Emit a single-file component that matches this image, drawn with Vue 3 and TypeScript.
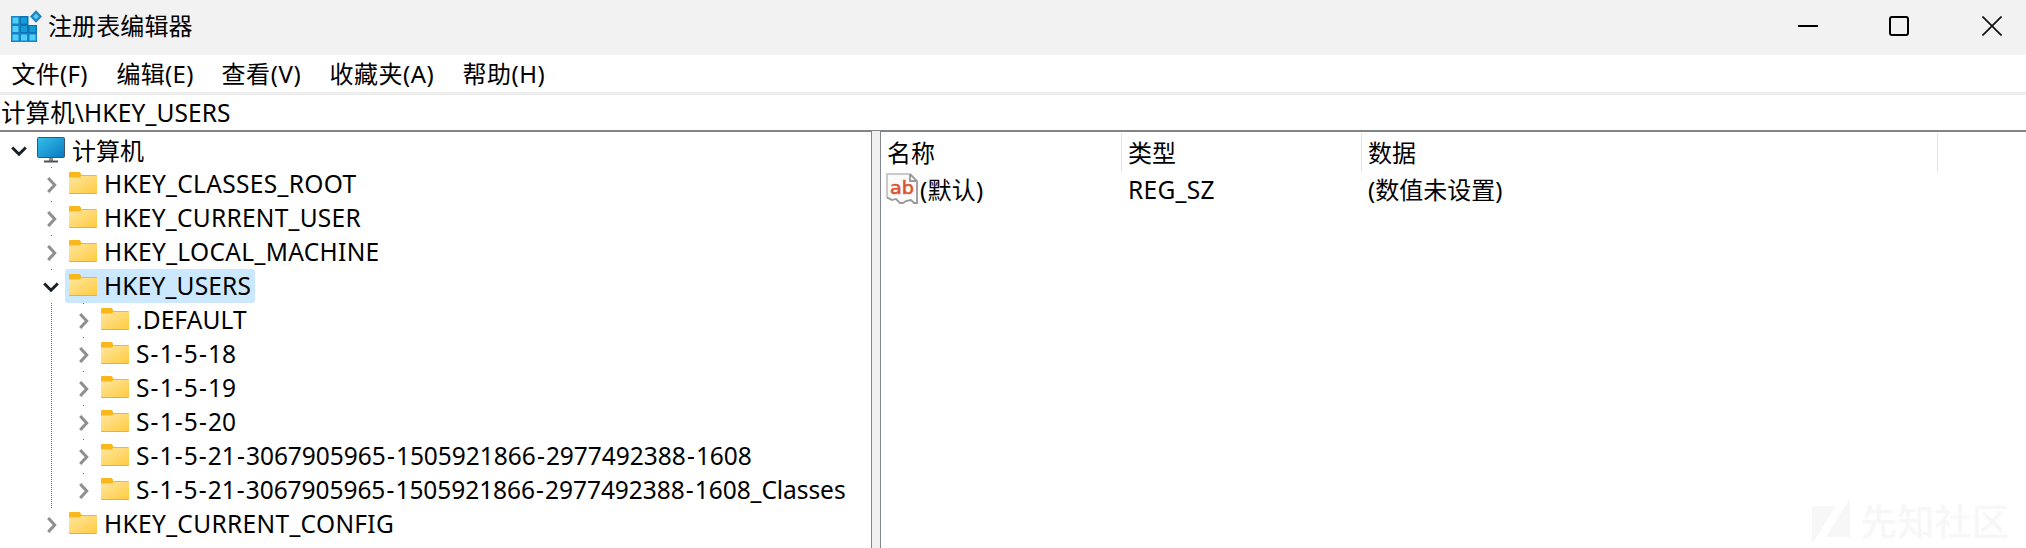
<script setup lang="ts">
interface Label { text: string; spacing?: number }
interface TreeNode extends Label { depth: number; open?: boolean; selected?: boolean; root?: boolean }

const menus: Label[] = [
  { text: '文件(F)', spacing: 0.3 },
  { text: '编辑(E)', spacing: 0.3 },
  { text: '查看(V)', spacing: 0.6 },
  { text: '收藏夹(A)', spacing: 0.5 },
  { text: '帮助(H)', spacing: 0.5 },
]

const nodes: TreeNode[] = [
  { text: '计算机', depth: 0, open: true, root: true },
  { text: 'HKEY_CLASSES_ROOT', depth: 1, spacing: 0.32 },
  { text: 'HKEY_CURRENT_USER', depth: 1, spacing: 0.26 },
  { text: 'HKEY_LOCAL_MACHINE', depth: 1, spacing: 0.33 },
  { text: 'HKEY_USERS', depth: 1, open: true, selected: true, spacing: 0.18 },
  { text: '.DEFAULT', depth: 2, spacing: 0.1 },
  { text: 'S-1-5-18', depth: 2 },
  { text: 'S-1-5-19', depth: 2 },
  { text: 'S-1-5-20', depth: 2 },
  { text: 'S-1-5-21-3067905965-1505921866-2977492388-1608', depth: 2, spacing: -0.03 },
  { text: 'S-1-5-21-3067905965-1505921866-2977492388-1608_Classes', depth: 2, spacing: -0.06 },
  { text: 'HKEY_CURRENT_CONFIG', depth: 1, spacing: 0.33 },
]

const spacing = (l: Label) => ({ letterSpacing: `${l.spacing ?? 0}px` })
const parts = (text: string) => text.split(/(-)/)
</script>

<template>
  <div class="window">
    <header class="titlebar">
      <svg class="app-icon" width="32" height="32" viewBox="0 0 32 32">
        <path d="M1 6h17v9h9v17H1z" fill="#1583c4" />
        <path d="M10 6h8.500v9H27v8H10z" fill="#0f72b0" />
        <g fill="#4fd0fb">
          <path d="M2.500 7.500h6v6h-6zM2.500 16h6v6h-6zM2.500 24.500h6v6h-6zM11 24.500h6v6h-6zM19.500 24.500h6v6h-6z" />
        </g>
        <path d="M11 7.500h6v6h-6zM11 16h6v6h-6zM19.500 16h6v6h-6z" fill="#159ad8" />
        <path d="M26 .3l6 6.200-6 6.200-6-6.200z" fill="#1d83bd" />
        <path d="M26 3.500l3 3-3 3-3-3z" fill="#57c9f2" />
      </svg>
      <span class="title">注册表编辑器</span>
      <div class="controls">
        <svg width="20" height="20" viewBox="0 0 20 20"><path d="M0 10h20" stroke="#000" stroke-width="2" /></svg>
        <svg width="20" height="20" viewBox="0 0 20 20"><rect x="1" y="1" width="18" height="18" rx="2" fill="none" stroke="#000" stroke-width="2" /></svg>
        <svg width="20" height="20" viewBox="0 0 20 20"><path d="M.5.5l19 19M19.500.5l-19 19" stroke="#111" stroke-width="1.700" /></svg>
      </div>
    </header>

    <nav class="menubar">
      <span v-for="m in menus" :key="m.text" class="menu"><span :style="spacing(m)">{{ m.text }}</span></span>
    </nav>

    <div class="address"><span>计算机\HKEY_USERS</span></div>

    <main class="body">
      <section class="tree">
        <div v-for="n in nodes" :key="n.text" class="node" :class="'depth-' + n.depth">
          <i v-if="n.depth === 2" class="guide"></i>
          <span class="toggle">
            <i v-if="n.depth" class="dot"></i>
            <svg v-if="n.open" width="16" height="10" viewBox="0 0 16 10"><path d="M1.200 1.500L8 8.200l6.800-6.700" fill="none" stroke="#172126" stroke-width="3" /></svg>
            <svg v-else class="closed" width="10" height="16" viewBox="0 0 10 16"><path d="M1.200 1l6.500 7-6.500 7" fill="none" stroke="#8f8f8f" stroke-width="3" /></svg>
          </span>
          <span class="item" :class="{ selected: n.selected }">
            <svg v-if="n.root" class="pc" width="28" height="26" viewBox="0 0 28 26">
              <defs><linearGradient id="screen" x1="0" y1="0" x2="1" y2="1"><stop offset="0" stop-color="#35c0e8" /><stop offset="1" stop-color="#0878c4" /></linearGradient></defs>
              <path d="M12 20h4v4h-4z" fill="#8a9299" />
              <path d="M7 23.500h14v2H7z" fill="#4d5358" />
              <rect x=".5" y=".5" width="27" height="20" rx="1" fill="url(#screen)" stroke="#3f5560" />
            </svg>
            <svg v-else class="folder" width="28" height="22" viewBox="0 0 28 22">
              <defs><linearGradient id="folder" x1="0" y1="0" x2="1" y2="1"><stop offset="0" stop-color="#ffe7a0" /><stop offset="1" stop-color="#ffcb3f" /></linearGradient></defs>
              <path d="M0 1q0-1 1-1h9.500L12 1.500V3h15q1 0 1 1v4H0z" fill="#fab71c" />
              <path d="M0 5.500h10.500L12.500 4H28v16.500q0 1-1 1H1q-1 0-1-1z" fill="url(#folder)" />
              <path d="M0 20.800q0 .7 1 .7h26q1 0 1-.7" fill="none" stroke="#eeb024" />
            </svg>
            <span class="label" :class="{ 'root-label': n.root }" :style="spacing(n)"><span v-for="(p, i) in parts(n.text)" :key="i" :class="{ hyphen: p === '-' }">{{ p }}</span></span>
          </span>
        </div>
      </section>

      <div class="splitter"></div>

      <section class="list">
        <div class="columns">
          <span class="col name">名称</span>
          <span class="col type">类型</span>
          <span class="col data">数据</span>
        </div>
        <div class="values">
          <span class="cell name">
            <svg class="ab" width="32" height="32" viewBox="0 0 32 32">
              <path d="M1 1h23l7 7v22l-4 1-4-4-5 1-4 2-5-4H1z" fill="#fbfbfb" />
              <path d="M1 25V1h23" fill="none" stroke="#c9c9c9" stroke-width="2" />
              <path d="M24 1v7h7M24 1l7 7v22h-3l-3-3-5 1-3 2h-3l-4-4-4 1-4-2H1" fill="none" stroke="#999" stroke-width="1.800" />
              <text x="4" y="21" class="ab-text" textLength="24" lengthAdjust="spacingAndGlyphs">ab</text>
            </svg>
            <span class="default">(默认)</span>
          </span>
          <span class="cell type"><span class="reg">REG_SZ</span></span>
          <span class="cell data">(数值未设置)</span>
        </div>
      </section>
    </main>

    <div class="watermark">
      <svg width="38" height="46" viewBox="0 0 38 46"><path d="M0 8h24L0 46zM38 0v39H14z" fill="#f7f7f7" /></svg>
      <span>先知社区</span>
    </div>
  </div>
</template>

<style>
body { margin: 0; overflow: hidden; }
</style>

<style scoped>
.window { position: relative; display: flex; flex-direction: column; width: 2026px; height: 548px; overflow: hidden; background: #fff; color: #000; font: 24px/34px "Noto Sans", "Noto Sans CJK SC", sans-serif; white-space: nowrap; }
svg { display: block; flex: none; }
.titlebar { display: flex; box-sizing: border-box; height: 55px; padding: 10px 24px 0 10px; background: #f2f2f2; }
.title { margin: -1px 0 0 6px; letter-spacing: .1px; }
.controls { display: flex; margin: 6px 0 0 auto; }
.controls svg + svg { margin-left: 71px; }
.controls svg:last-child { margin-left: 73px; }
.menubar { display: flex; height: 37px; padding-left: 11.500px; line-height: 38px; }
.menu { width: 105px; }
.menu:nth-child(3) { width: 108px; }
.menu:nth-child(4) { width: 133px; }
.address { box-sizing: border-box; height: 40px; padding-left: 1px; border-top: 3px solid #ededed; border-bottom: 2px solid #838387; font-size: 24.5px; line-height: 35px; letter-spacing: .12px; }
.body { display: flex; flex: 1; }
.tree { width: 871px; padding-top: 1px; }
.node { position: relative; display: flex; height: 34px; }
.depth-0 { padding-left: 3px; }
.depth-1 { padding-left: 35px; }
.depth-2 { padding-left: 67px; }
.guide { position: absolute; top: 0; left: 51px; width: 1px; height: 34px; background: repeating-linear-gradient(#777 0 1px, transparent 1px 2px); }
.toggle { position: relative; display: flex; width: 30px; height: 34px; align-items: center; justify-content: center; }
.toggle svg { margin: 2px 0 0 2px; }
.toggle .closed { margin: 2px 0 0 3px; }
.dot { position: absolute; top: 0; left: 16px; width: 1px; height: 1px; background: #666; }
.item { display: flex; height: 34px; padding: 0 4px 0 0; border-radius: 3px; }
.item svg { margin-left: 4px; }
.selected { background: #cce8ff; }
.pc { margin-top: 4px; }
.folder { margin-top: 5px; }
.label { margin-left: 7px; font-size: 24.5px; line-height: 33px; }
.root-label { margin-left: 7px; font-size: 24px; line-height: 35px; }
.hyphen { padding: 0 1.15px; }
.splitter { width: 8px; margin-top: -1px; border: solid #838790; border-width: 0 1px; background: #f0f0f0; }
.list { flex: 1; }
.columns { display: flex; height: 39px; padding-top: 1px; line-height: 40px; }
.col { box-sizing: border-box; border-right: 1px solid #e5e5e5; }
.name { width: 241px; padding-left: 6px; }
.type { width: 240px; padding-left: 6px; }
.data { width: 576px; padding-left: 6px; }
.values { display: flex; height: 34px; padding-top: 1px; }
.cell { box-sizing: border-box; }
.cell.name { display: flex; padding-left: 5px; }
.ab { margin-right: 2px; }
.default { letter-spacing: .3px; }
.reg { font-size: 24.500px; letter-spacing: .3px; }
.ab-text { fill: #dc5430; stroke: #dc5430; stroke-width: .6px; font: 18px "DejaVu Sans", sans-serif; }
.watermark { position: absolute; right: 17px; bottom: 4px; display: flex; color: #f7f7f7; font: 500 37px/44px "Noto Sans CJK SC", sans-serif; }
.watermark span { margin-left: 10px; letter-spacing: .2px; }
</style>
